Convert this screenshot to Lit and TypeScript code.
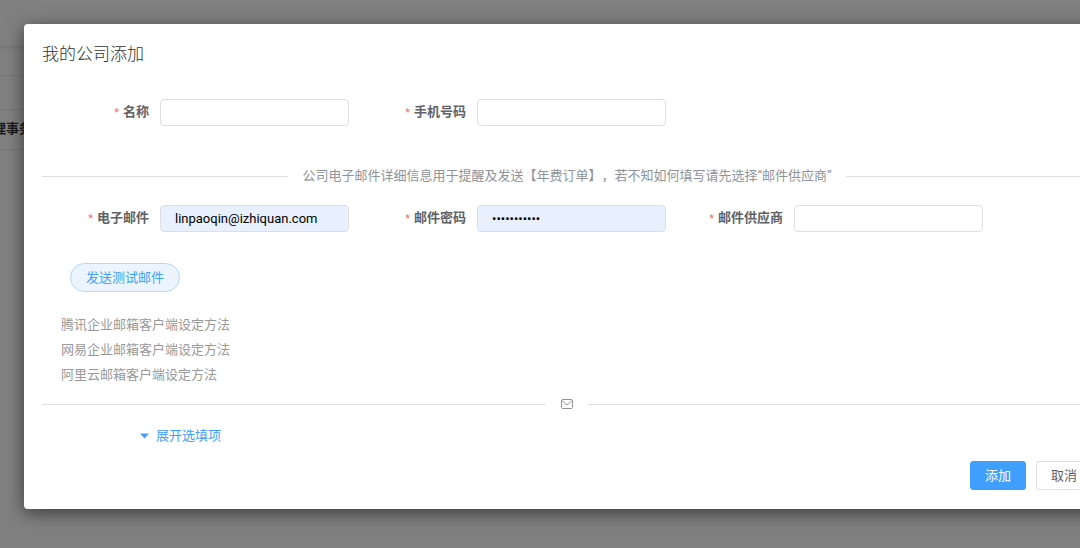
import { LitElement, html, css } from "lit";
import { customElement, property } from "lit/decorators.js";

@customElement("form-field")
class FormField extends LitElement {
  @property() label = "";
  @property() type = "text";
  @property() value = "";

  static styles = css`
    :host {
      display: flex;
      align-items: center;
      width: 317px;
    }
    .label {
      flex: none;
      box-sizing: border-box;
      width: 118px;
      padding-right: 11px;
      text-align: right;
      font-weight: 700;
      color: #606266;
      line-height: 20px;
      white-space: nowrap;
    }
    .star {
      color: #f56c6c;
      font-size: 11px;
      font-weight: 400;
      margin-right: 4px;
    }
    .input {
      box-sizing: border-box;
      width: 189px;
      height: 27px;
      padding: 0 14px;
      border: 1px solid #dcdfe6;
      border-radius: 4px;
      background: #fff;
      color: #000;
      font: inherit;
      outline: none;
    }
    .filled {
      background: #e8f0fe;
    }
  `;

  render() {
    return html`
      <label class="label" for="field"><span class="star">*</span>${this.label}</label>
      <input
        id="field"
        class="input ${this.value ? "filled" : ""}"
        type=${this.type}
        .value=${this.value}
      />
    `;
  }
}

@customElement("text-divider")
class TextDivider extends LitElement {
  static styles = css`
    :host {
      display: flex;
      align-items: center;
      gap: 14px;
      height: 20px;
      line-height: 20px;
      color: #909399;
      white-space: nowrap;
    }
    .line {
      flex: 1;
      height: 1px;
      background: #dcdfe6;
    }
    .content {
      display: flex;
      align-items: center;
    }
  `;

  render() {
    return html`
      <span class="line"></span>
      <span class="content"><slot></slot></span>
      <span class="line"></span>
    `;
  }
}

@customElement("app-root")
class AppRoot extends LitElement {
  static styles = css`
    :host {
      display: grid;
      min-height: 100vh;
      overflow: hidden;
      background: #808080;
      font-family: Roboto, "Noto Sans CJK SC", sans-serif;
      font-size: 13px;
      text-spacing-trim: space-all;
    }
    .page,
    .dialog {
      grid-area: 1 / 1;
    }
    .page {
      line-height: 20px;
      color: #1a1a1a;
      font-weight: 700;
    }
    .topbar {
      height: 46px;
      box-shadow: 0 1px 4px #6e6e6e;
    }
    .row {
      box-sizing: border-box;
      height: 34px;
      border-bottom: 1px solid #767676;
    }
    .first {
      height: 30px;
    }
    .record {
      display: flex;
      height: 40px;
      padding-top: 9px;
    }
    .record span {
      margin-left: -7px;
      white-space: nowrap;
    }
    .dialog {
      z-index: 1;
      align-self: start;
      margin: 24px -30px 24px 24px;
      padding: 18px 18px 19px;
      border-radius: 4px;
      background: #fff;
      box-shadow: 0 4px 18px rgba(0, 0, 0, 0.55);
    }
    .title {
      margin: 0 0 33px;
      font-size: 17px;
      line-height: 24px;
      font-weight: 300;
      color: #303133;
    }
    .fields {
      display: flex;
    }
    .contact {
      margin-bottom: 40px;
    }
    .account {
      margin: 19px 0 31px;
    }
    .button {
      box-sizing: border-box;
      height: 29px;
      padding: 0 14px;
      border: 1px solid #dcdfe6;
      border-radius: 3px;
      background: #fff;
      color: #606266;
      font: inherit;
      line-height: 20px;
    }
    .test {
      display: block;
      margin-left: 28px;
      padding: 0 15px;
      border-color: #b3d8ff;
      border-radius: 15px;
      background: #ecf5ff;
      color: #409eff;
    }
    .primary {
      border-color: #409eff;
      background: #409eff;
      color: #fff;
    }
    .guides {
      display: grid;
      gap: 5px;
      margin: 23px 0 9px 19px;
      padding: 0;
      list-style: none;
      line-height: 20px;
    }
    .guide {
      color: #999;
      text-decoration: none;
    }
    .envelope {
      display: block;
    }
    .expand {
      display: flex;
      align-items: center;
      gap: 7px;
      margin: 12px 0 15px 98px;
      padding: 0;
      border: 0;
      background: none;
      color: #409eff;
      font: inherit;
      line-height: 20px;
    }
    .actions {
      display: flex;
      justify-content: flex-end;
      gap: 10px;
    }
  `;

  guides = [
    "腾讯企业邮箱客户端设定方法",
    "网易企业邮箱客户端设定方法",
    "阿里云邮箱客户端设定方法",
  ];

  render() {
    return html`
      <div class="page">
        <div class="topbar"></div>
        <div class="row first"></div>
        <div class="row"></div>
        <div class="row record"><span>理事务</span></div>
      </div>
      <section class="dialog" role="dialog" aria-labelledby="title">
        <h1 class="title" id="title">我的公司添加</h1>
        <div class="fields contact">
          <form-field label="名称"></form-field>
          <form-field label="手机号码"></form-field>
        </div>
        <text-divider>公司电子邮件详细信息用于提醒及发送【年费订单】，若不知如何填写请先选择“邮件供应商”</text-divider>
        <div class="fields account">
          <form-field label="电子邮件" value="linpaoqin@izhiquan.com"></form-field>
          <form-field label="邮件密码" type="password" value="12345678901"></form-field>
          <form-field label="邮件供应商"></form-field>
        </div>
        <button class="button test" type="button">发送测试邮件</button>
        <ul class="guides">
          ${this.guides.map((g) => html`<li><a class="guide" href="#">${g}</a></li>`)}
        </ul>
        <text-divider>
          <svg class="envelope" width="14" height="12" viewBox="0 0 14 12" fill="none" stroke="#909399">
            <rect x="1.5" y="1.5" width="11" height="9" rx="1" />
            <path d="M2 2.5 5.8 6.1Q7 7.1 8.2 6.1L12 2.5" />
          </svg>
        </text-divider>
        <button class="expand" type="button">
          <svg width="9" height="6" viewBox="0 0 9 6"><path d="M0 .5h9L4.5 5.5z" fill="#409eff" /></svg>
          展开选填项
        </button>
        <div class="actions">
          <button class="button primary" type="button">添加</button>
          <button class="button" type="button">取消</button>
        </div>
      </section>
    `;
  }
}
